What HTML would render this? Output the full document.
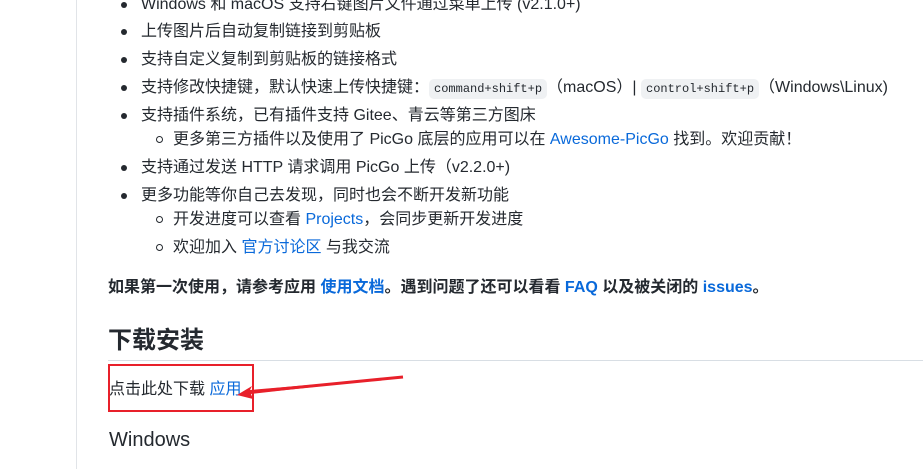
<html><head><style>
body{margin:0;width:923px;height:469px;overflow:hidden;background:#fff;font-family:"Liberation Sans","Noto Sans CJK SC",sans-serif;color:#24292f;font-size:16px;position:relative}
.l{position:absolute;white-space:nowrap;line-height:20px}
.d{position:absolute;width:6px;height:6px;border-radius:50%;background:#24292f}
.c{position:absolute;width:5px;height:5px;border-radius:50%;border:1px solid #24292f}
a{color:#0969da;text-decoration:none}
code{font-family:"Liberation Mono",monospace;font-size:12px;background:#eff1f3;border-radius:5px;padding:3px 5px}
</style></head><body>
<div style="position:absolute;left:76px;top:0;width:1px;height:469px;background:#e1e4e8"></div>
<div class="d" style="left:121px;top:2px"></div><div class="l" style="left:141px;top:-5px">Windows 和 macOS 支持右键图片文件通过菜单上传 (v2.1.0+)</div>
<div class="d" style="left:121px;top:29px"></div><div class="l" style="left:141px;top:22px">上传图片后自动复制链接到剪贴板</div>
<div class="d" style="left:121px;top:57px"></div><div class="l" style="left:141px;top:50px">支持自定义复制到剪贴板的链接格式</div>
<div class="d" style="left:121px;top:85px"></div><div class="l" style="left:141px;top:78px">支持修改快捷键，默认快速上传快捷键：<code>command+shift+p</code>（macOS）| <code>control+shift+p</code>（Windows\Linux)</div>
<div class="d" style="left:121px;top:113px"></div><div class="l" style="left:141px;top:106px">支持插件系统，已有插件支持 Gitee、青云等第三方图床</div>
<div class="c" style="left:156px;top:136px"></div><div class="l" style="left:173px;top:130px">更多第三方插件以及使用了 PicGo 底层的应用可以在 <a>Awesome-PicGo</a> 找到。欢迎贡献！</div>
<div class="d" style="left:121px;top:165px"></div><div class="l" style="left:141px;top:158px">支持通过发送 HTTP 请求调用 PicGo 上传（v2.2.0+)</div>
<div class="d" style="left:121px;top:193px"></div><div class="l" style="left:141px;top:186px">更多功能等你自己去发现，同时也会不断开发新功能</div>
<div class="c" style="left:156px;top:216px"></div><div class="l" style="left:173px;top:210px">开发进度可以查看 <a>Projects</a>，会同步更新开发进度</div>
<div class="c" style="left:156px;top:244px"></div><div class="l" style="left:173px;top:238px">欢迎加入 <a>官方讨论区</a> 与我交流</div>
<div class="l" style="left:108px;top:278px;font-weight:bold">如果第一次使用，请参考应用 <a>使用文档</a>。遇到问题了还可以看看 <a>FAQ</a> 以及被关闭的 <a>issues</a>。</div>
<div class="l" style="left:108px;top:326px;font-size:24px;line-height:30px;font-weight:bold">下载安装</div>
<div style="position:absolute;left:108px;top:360px;width:815px;height:1px;background:#d8dee4"></div>
<div class="l" style="left:109px;top:380px">点击此处下载 <a>应用</a></div>
<div style="position:absolute;left:108px;top:364px;width:142px;height:44px;border:2px solid #e8202a"></div>
<svg style="position:absolute;left:0;top:0" width="923" height="469"><path d="M403 377 L250 390 L252 386 L237 395 L253 399 L251 394 Z" fill="#e8202a"/><path d="M403 377 L250 392" stroke="#e8202a" stroke-width="3"/></svg>
<div class="l" style="left:109px;top:428px;font-size:20px;line-height:24px">Windows</div>
</body></html>
